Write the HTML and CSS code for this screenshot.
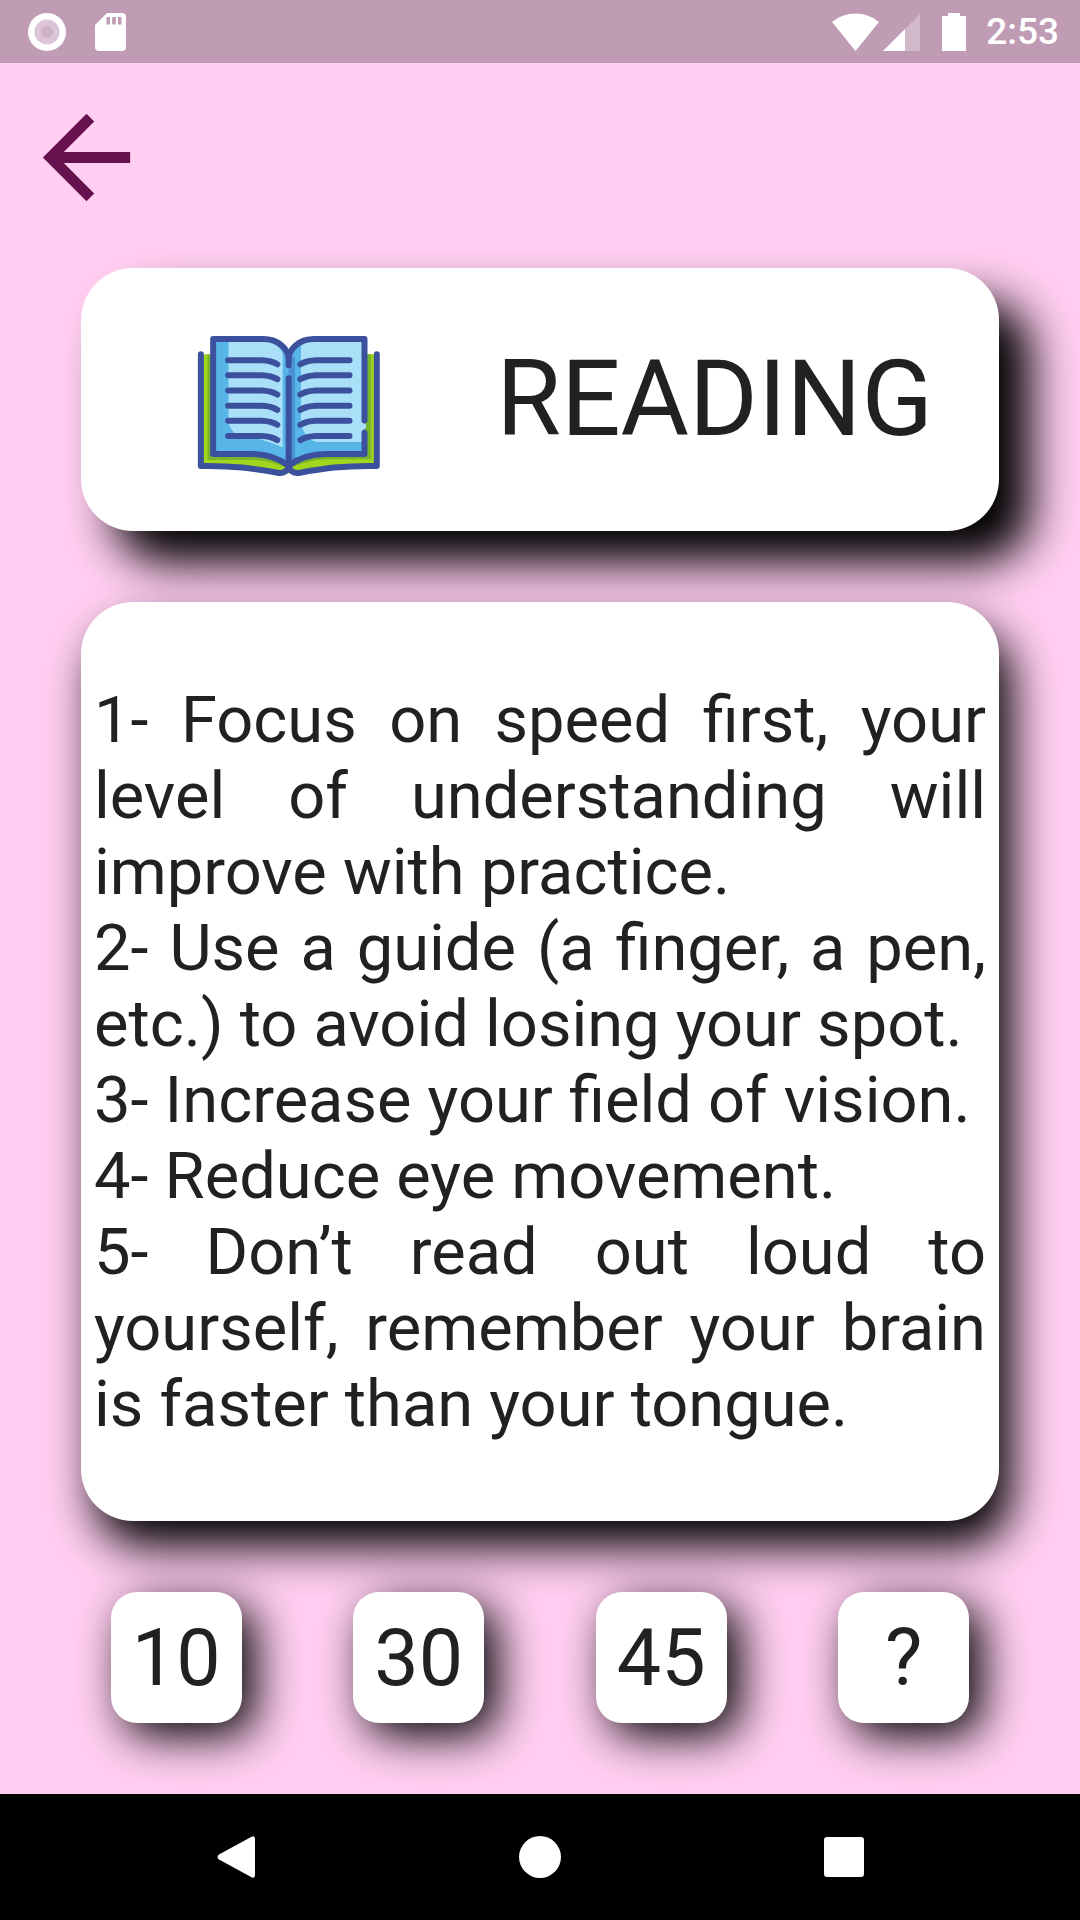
FILE: index.html
```html
<!DOCTYPE html>
<html lang="en">
<head>
<meta charset="utf-8">
<meta name="viewport" content="width=device-width, initial-scale=1">
<title>Reading</title>
<link rel="stylesheet" href="styles.css">
</head>
<body>
<header class="status">
  <div class="status-group status-left">
    <svg width="38" height="38" viewBox="0 0 38 38" aria-hidden="true">
      <circle cx="19" cy="19" r="19" fill="#fff"/>
      <circle cx="19" cy="19" r="12.5" fill="#dcc5d6"/>
      <circle cx="19" cy="19" r="6" fill="#cfb2c7"/>
    </svg>
    <svg width="31" height="38" viewBox="0 0 31 38" aria-hidden="true">
      <path fill="#fff" fill-rule="evenodd" d="M12 0H27Q31 0 31 4V34Q31 38 27 38H4Q0 38 0 34V12ZM11.500 4V11.500H15V4ZM17.200 4V11.500H20.800V4ZM23 4V11.500H26.500V4Z"/>
    </svg>
  </div>
  <div class="status-group status-right">
    <svg class="wifi" width="47" height="38" viewBox="0 0 47 38" aria-hidden="true">
      <path fill="#fff" d="M0 9Q10 .5 23.500 .5T47 9L23.500 38Z"/>
    </svg>
    <svg class="signal" width="37" height="38" viewBox="0 0 37 38" aria-hidden="true">
      <path fill="#fff" fill-opacity=".3" d="M37 1V38H0Z"/>
      <path fill="#fff" d="M22 16V38H0Z"/>
    </svg>
    <svg class="battery" width="24" height="38" viewBox="0 0 24 38" aria-hidden="true">
      <path fill="#fff" d="M6 0H18V3H24V38H0V3H6Z"/>
    </svg>
    <span class="time">2:53</span>
  </div>
</header>

<main class="main">
  <button class="back" type="button" aria-label="Back">
    <svg width="131" height="131" viewBox="0 0 24 24" aria-hidden="true">
      <path fill="#66124f" d="M20 11H7.830l5.590-5.590L12 4l-8 8 8 8 1.410-1.410L7.830 13H20z"/>
    </svg>
  </button>

  <section class="card title-card">
    <svg class="book" width="183" height="153" viewBox="51 8 549 460" fill="none" aria-hidden="true">
      <path fill="#a2d61c" d="M66 102H588V436Q420 436 350 460H302Q230 436 66 436Z"/>
      <path fill="#79b52c" d="M82 102H574V418H440Q380 420 326 446Q270 420 215 420H82Z"/>
      <path fill="#58b5e8" d="M100 57H253Q310 60 326 112Q342 60 400 57H555V402H440Q370 402 326 432Q280 402 215 402H100Z"/>
      <path fill="#a9e0f8" d="M145 60H253Q296 68 308 100V382Q260 360 165 340Q148 325 145 305Z"/>
      <path fill="#4992d6" d="M326 110H345V420L326 430Z"/>
      <path fill="#a9e0f8" d="M363 75Q380 60 400 60H550V366H410Q370 355 363 305Z"/>
      <path fill="#79b52c" d="M555 310L574 300V410L555 395Z"/>
      <circle cx="550" cy="318" r="9" fill="#a9e0f8"/>
      <g stroke="#3b519e" stroke-width="18" stroke-linecap="round" stroke-linejoin="round">
        <path d="M326 135V118C326 82 290 56 250 56H99V402H215C260 402 300 418 326 437C352 418 392 402 437 402H554V338M554 301V56H402C362 56 326 82 326 118"/>
        <path d="M326 174V437M62 102V438C160 436 220 446 292 458Q316 462 326 443Q336 462 360 458C430 446 490 436 591 438V102"/>
        <path d="M144 120H245Q273 121 292 132M144 165H245Q273 166 292 177M144 211H245Q273 212 292 223M144 257H245Q273 258 292 269M144 302H245Q273 303 292 314M144 348H245Q273 349 292 360"/>
        <path d="M509 120H408Q380 121 361 132M509 165H408Q380 166 361 177M509 211H408Q380 212 361 223M509 257H408Q380 258 361 269M509 302H408Q380 303 361 314M509 348H408Q380 349 361 360"/>
      </g>
    </svg>
    <h1 class="title">READING</h1>
  </section>

  <section class="card tips">
    <p>1- Focus on speed first, your level of understanding will improve with practice.</p>
    <p>2- Use a guide (a finger, a pen, etc.) to avoid losing your spot.</p>
    <p>3- Increase your field of vision.</p>
    <p>4- Reduce eye movement.</p>
    <p>5- Don’t read out loud to yourself, remember your brain is faster than your tongue.</p>
  </section>

  <div class="times">
    <button class="time-button" type="button">10</button>
    <button class="time-button" type="button">30</button>
    <button class="time-button" type="button">45</button>
    <button class="time-button" type="button">?</button>
  </div>
</main>

<nav class="navbar">
  <button class="nav-button" type="button" aria-label="Back">
    <svg width="42" height="42" viewBox="0 0 42 42" aria-hidden="true"><path fill="#fff" d="M37 .5Q40 -.5 40 3V39Q40 42.500 37 41.500L4 23.500Q1 21 4 18.500Z"/></svg>
  </button>
  <button class="nav-button" type="button" aria-label="Home">
    <svg width="42" height="42" viewBox="0 0 42 42" aria-hidden="true"><circle cx="21" cy="21" r="21" fill="#fff"/></svg>
  </button>
  <button class="nav-button" type="button" aria-label="Recent apps">
    <svg width="42" height="42" viewBox="0 0 42 42" aria-hidden="true"><rect x="1" y="1" width="40" height="40" rx="3" fill="#fff"/></svg>
  </button>
</nav>
</body>
</html>
```
FILE: styles.css
```css
* {
  box-sizing: border-box;
}

body {
  margin: 0;
  min-height: 100vh;
  display: flex;
  flex-direction: column;
  background: #ffcef0;
  color: #212121;
  font-family: Roboto, "Liberation Sans", sans-serif;
}

button {
  margin: 0;
  padding: 0;
  border: 0;
  background: none;
  color: inherit;
  font-family: inherit;
}

svg {
  display: block;
}

.status {
  display: flex;
  align-items: center;
  justify-content: space-between;
  height: 63px;
  padding: 0 21px 0 28px;
  background: #bf9bb4;
  color: #fff;
}

.status-group {
  display: flex;
  align-items: center;
}

.status-left {
  gap: 29px;
}

.signal {
  margin-left: 4px;
}

.battery {
  margin-left: 22px;
}

.time {
  margin-left: 20px;
  font-size: 37px;
  font-weight: 500;
  line-height: 44px;
}

.main {
  flex: 1;
  display: flex;
  flex-direction: column;
  padding: 29px 55px 71px;
}

.back {
  align-self: flex-start;
  margin: 0 0 45px -34px;
}

.card {
  margin: 0 26px;
  border-radius: 52px;
  background: #fff;
}

.title-card {
  display: flex;
  align-items: center;
  justify-content: space-between;
  min-height: 263px;
  padding: 0 66px 0 116px;
  box-shadow: 32px 32px 46px #000;
}

.title {
  margin: 0;
  font-size: 105px;
  font-weight: 400;
  line-height: 123px;
}

.tips {
  display: flex;
  flex-direction: column;
  justify-content: center;
  min-height: 919px;
  margin-top: 71px;
  padding: 0 13px;
  box-shadow: 13px 26px 46px #000;
  font-size: 65px;
  line-height: 76px;
  text-align: justify;
}

.tips p {
  margin: 0;
}

.times {
  display: flex;
  justify-content: space-around;
  margin-top: 71px;
}

.time-button {
  width: 131px;
  height: 131px;
  border-radius: 26px;
  background: #fff;
  box-shadow: 13px 13px 46px #000;
  font-size: 79px;
  line-height: 92px;
}

.navbar {
  display: flex;
  align-items: center;
  justify-content: space-around;
  height: 126px;
  padding: 0 84px;
  background: #000;
}
```
